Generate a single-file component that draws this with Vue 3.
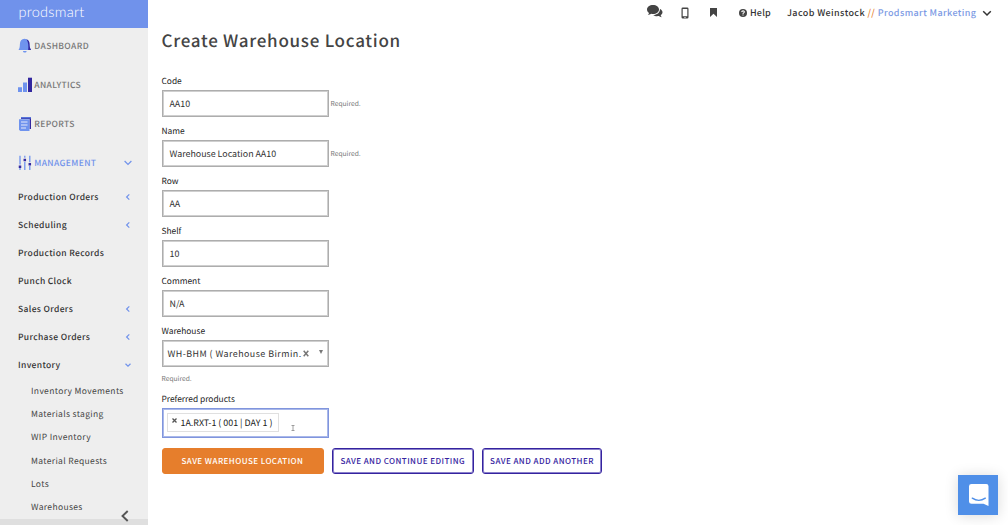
<script setup>
const fields = [
  { label: 'Code', value: 'AA10', required: true },
  { label: 'Name', value: 'Warehouse Location AA10', required: true },
  { label: 'Row', value: 'AA' },
  { label: 'Shelf', value: '10' },
  { label: 'Comment', value: 'N/A' },
]
const sections = [
  { text: 'Production Orders', arrow: 'left' },
  { text: 'Scheduling', arrow: 'left' },
  { text: 'Production Records' },
  { text: 'Punch Clock' },
  { text: 'Sales Orders', arrow: 'left' },
  { text: 'Purchase Orders', arrow: 'left' },
  { text: 'Inventory', arrow: 'down' },
]
const leaves = ['Inventory Movements', 'Materials staging', 'WIP Inventory', 'Material Requests', 'Lots', 'Warehouses']
</script>

<template>
  <div class="page">
    <aside class="sidebar">
      <div class="logo">prodsmart</div>
      <nav>
        <div class="main-item">
          <svg class="icon" width="14" height="16" viewBox="0 0 14 16">
            <path d="M6.500 .8C3.500 1 2 3 1.900 6 1.800 9 1.600 10.200 .5 12h12.600C12 10.200 11.600 9 11.500 6 11.400 3 9.500 1 6.500 .8z" fill="#6f93ee" />
            <path d="M8.500 1.300c2 .7 3 2.300 3 4.700.1 3 .5 4.200 1.600 6H10.200C10.600 8.500 10.500 4.500 8.500 1.300z" fill="#33279f" />
            <path d="M5 13h3.600c0 1-.8 1.600-1.800 1.600S5 14 5 13z" fill="#6f93ee" />
          </svg>
          <span>DASHBOARD</span>
        </div>
        <div class="main-item">
          <svg class="icon" width="14" height="16" viewBox="0 0 14 16">
            <path d="M0 10.200h4V15H0zM5 5.500h4V15H5z" fill="#6f93ee" />
            <path d="M10 .7h4V15h-4z" fill="#33279f" />
          </svg>
          <span>ANALYTICS</span>
        </div>
        <div class="main-item">
          <svg class="icon" width="14" height="16" viewBox="0 0 14 16">
            <path d="M3 1h10v12h-1.500V3H3z" fill="#33279f" />
            <path d="M3 1H13v1.500H3z" fill="#5774d8" />
            <path d="M1 3.200h10.500V15H2.300L1 13.700z" fill="#6f93ee" />
            <path d="M3 6h6.500M3 9h6.500M3 12h5" stroke="#e5eafa" stroke-width="1.100" />
          </svg>
          <span>REPORTS</span>
        </div>
        <div class="main-item active">
          <svg class="icon" width="14" height="16" viewBox="0 0 14 16">
            <path d="M2 .8v8.700M2 13v2M6.800 .8v2M6.800 7v8M11.800 .8v6.500M11.800 11v4" stroke="#6f93ee" stroke-width="1.300" />
            <path d="M2 10.500v2.500M6.800 3.800v2.500M11.800 8v2.500" stroke="#33279f" stroke-width="2.500" />
          </svg>
          <span>MANAGEMENT</span>
          <svg class="arrow" width="8" height="6" viewBox="0 0 8 6"><path d="M.6 1L4 4.500 7.400 1" /></svg>
        </div>
        <div v-for="s in sections" :key="s.text" class="section">
          <span>{{ s.text }}</span>
          <svg v-if="s.arrow === 'left'" class="arrow" width="6" height="8" viewBox="0 0 6 8"><path d="M4.300 1.300L1.600 4l2.700 2.700" /></svg>
          <svg v-if="s.arrow === 'down'" class="arrow" width="6" height="6" viewBox="0 0 6 6"><path d="M.5 1.800L3 4.200 5.500 1.800" /></svg>
        </div>
        <div class="leaves">
          <div v-for="l in leaves" :key="l" class="leaf">{{ l }}</div>
        </div>
      </nav>
      <div class="foot"></div>
      <svg class="collapse" width="8" height="12" viewBox="0 0 8 12"><path d="M6.700 1L1.500 6l5.200 5" /></svg>
    </aside>

    <main>
      <header class="topbar">
        <svg class="chat" width="16" height="13" viewBox="0 0 16 13">
          <path d="M6 0c3.400 0 6 2 6 4.500S9.400 9 6 9c-.7 0-1.300-.1-1.900-.2C3.200 9.500 2 10 .8 10c.7-.6 1.100-1.300 1.200-2C.8 7.200 0 6 0 4.500 0 2 2.600 0 6 0z" />
          <path d="M13 4c1.500.7 2.500 1.900 2.500 3.300 0 1.200-.7 2.200-1.800 3 .1.700.5 1.300 1.100 1.900-1.100 0-2.200-.4-3.100-1.100-2.200.4-4.200-.1-5.500-1.100C10 10 13 7.700 13 4z" />
        </svg>
        <svg class="phone" width="8" height="12" viewBox="0 0 8 12">
          <path fill-rule="evenodd" d="M1.800 .5h4.400q1.300 0 1.300 1.300v8.400q0 1.300-1.300 1.300H1.800Q.5 11.500.5 10.200V1.800Q.5.5 1.800.5zM1.700 2v7.300h4.600V2zM3.300 10v.8h1.400V10z" />
        </svg>
        <svg class="bookmark" width="7" height="9" viewBox="0 0 7 9"><path d="M0 0h7v9L3.500 5.800 0 9z" /></svg>
        <svg class="question" width="8" height="8" viewBox="0 0 8 8">
          <circle cx="4" cy="4" r="4" />
          <path d="M2.700 3.100C2.800 1.400 5.400 1.500 5.300 3 5.200 3.900 4 3.900 4 4.900M4 5.600v1" fill="none" stroke="#fff" stroke-width="1.100" />
        </svg>
        <span class="help">Help</span>
        <span class="user">Jacob Weinstock <i>//</i> <b>Prodsmart Marketing</b></span>
        <svg class="caret" width="10" height="7" viewBox="0 0 10 7"><path d="M1.200 1.200L5 5l3.800-3.800" fill="none" stroke="#333" stroke-width="1.500" /></svg>
      </header>

      <h1>Create Warehouse Location</h1>

      <div v-for="f in fields" :key="f.label" class="field">
        <label>{{ f.label }}</label>
        <div class="row">
          <div class="input">{{ f.value }}</div>
          <small v-if="f.required">Required.</small>
        </div>
      </div>
      <div class="field">
        <label>Warehouse</label>
        <div class="input select">
          <span>WH-BHM ( Warehouse Birmin.</span>
          <svg class="clear" width="6" height="7" viewBox="0 0 6 7"><path d="M.7 .8l4.600 5.400M5.300 .8L.7 6.200" stroke="#777" stroke-width="1.500" fill="none" /></svg>
          <svg class="tri" width="4" height="4" viewBox="0 0 4 4"><path d="M0 0h4L2 4z" fill="#777" /></svg>
        </div>
      </div>
      <small class="below">Required.</small>
      <div class="field products">
        <label>Preferred products</label>
        <div class="input tags">
          <div class="tag">
            <svg width="5" height="5" viewBox="0 0 5 5"><path d="M.5 .5l4 4M4.500 .5l-4 4" stroke="#555" stroke-width="1.300" /></svg>
            <span>1A.RXT-1 ( 001 | DAY 1 )</span>
          </div>
          <svg class="ibeam" width="4" height="6" viewBox="0 0 4 6"><path d="M.5 .5h3M2 .5v5M.5 5.500h3" stroke="#888" stroke-width=".8" /></svg>
        </div>
      </div>
      <div class="actions">
        <button class="primary">SAVE WAREHOUSE LOCATION</button>
        <button class="second">SAVE AND CONTINUE EDITING</button>
        <button class="third">SAVE AND ADD ANOTHER</button>
      </div>
    </main>

    <div class="messenger">
      <svg width="20" height="23" viewBox="0 0 20 23">
        <path d="M2.500 0h14.800Q19.500 0 19.500 2.300V22l-5-2.200h-12Q0 19.800 0 17.500V2.300Q0 0 2.500 0z" fill="#fff" />
        <path d="M3.300 14.200q6.500 4.300 13 0" fill="none" stroke="#4f8fe8" stroke-width="1.400" stroke-linecap="round" />
      </svg>
    </div>
  </div>
</template>

<style>
body { background: #fff; overflow: hidden; }
</style>

<style scoped>
.page {
  position: relative;
  display: flex;
  width: 1008px;
  height: 525px;
  overflow: hidden;
  font-family: "Noto Sans CJK SC", "Noto Sans", sans-serif;
  font-size: 9px;
  color: #333;
}
.page, .page * { text-rendering: geometricPrecision; }
.page * { box-sizing: border-box; }
svg { display: block; flex: none; }
.sidebar { position: relative; width: 148px; height: 525px; background: #eee; flex: none; overflow: hidden; }
.logo {
  height: 28px;
  padding-left: 18.500px;
  background: #7092eb;
  color: #fff;
  font: 300 14.500px/26px Lato, sans-serif;
  letter-spacing: .25px;
}
.main-item {
  display: flex;
  align-items: center;
  height: 39px;
  padding: 0 16px 0 18px;
  color: #777;
  font-size: 8.500px;
  font-weight: 500;
  letter-spacing: .36px;
}
nav > .main-item:first-child { height: 36px; margin-bottom: 1px; }
.main-item .icon { margin-right: 2.300px; }
.main-item.active { height: 39px; color: #7092eb; }
.arrow { margin-left: auto; fill: none; stroke: #7092eb; stroke-width: 1.200; }
.section {
  display: flex;
  align-items: center;
  height: 28.060px;
  padding: 1px 17px 0 18px;
  color: #333;
  font-size: 8.500px;
  font-weight: 500;
  letter-spacing: .35px;
}
.leaves { padding-top: 1.300px; }
.leaf { height: 23.300px; padding-left: 31px; font-size: 8.500px; line-height: 23.300px; letter-spacing: .35px; color: #444; }
.foot { position: absolute; left: 0; right: 0; bottom: 0; height: 6px; background: #dfdfdf; }
.collapse { position: absolute; left: 121px; top: 510px; fill: none; stroke: #555; stroke-width: 1.900; }

main { flex: 1; padding-left: 13.500px; }
.topbar { display: flex; align-items: center; height: 25px; padding-left: 485.500px; fill: #444; white-space: nowrap; }
.chat { margin: -3px 18px 0 0; }
.phone { margin-right: 21px; }
.bookmark { margin-right: 22px; }
.question { margin-right: 3px; }
.help { width: 37px; font-weight: 500; letter-spacing: .2px; }
.user { font-weight: 500; letter-spacing: .4px; width: 190px; }
.user i { color: #e67e2c; font-style: normal; }
.user b { color: #7c9ae4; font-weight: 500; }
.caret { margin: 1px 0 0 5px; }
h1 { margin: 0; height: 48px; line-height: 29px; font-size: 17px; font-weight: 500; letter-spacing: .73px; color: #444; }
.field { height: 50px; }
label { display: block; height: 17px; font-size: 8.400px; line-height: 16.500px; color: #222; }
.row { display: flex; align-items: center; }
.input {
  position: relative;
  width: 167px;
  height: 27px;
  border: 1px solid #adadad;
  box-shadow: inset 0 0 0 1px #cfcfcf;
  padding: 0 7px;
  font-size: 8.900px;
  line-height: 25px;
  white-space: nowrap;
}
small { margin: -1px 0 0 2px; font-size: 6.700px; line-height: 10px; color: #777; }
.select { padding: 0 5px; letter-spacing: .46px; }
.clear { position: absolute; left: 140px; top: 9px; }
.tri { position: absolute; left: 156px; top: 9px; }
.below { display: block; margin: 0; height: 18px; line-height: 10px; }
.products { height: 57px; }
.tags { height: 30px; border-color: #8095dd; box-shadow: inset 0 0 0 1px #a9b8ea; padding: 4px; }
.tag {
  display: flex;
  width: 112px;
  height: 19px;
  border: 1px solid #e0e0e0;
  padding: 0 4px;
  line-height: 18px;
  color: #222;
}
.tag svg { margin: 4px 4px 0 0; }
.ibeam { position: absolute; left: 128px; top: 16px; }
.actions { display: flex; gap: 8.500px; }
button {
  height: 26px;
  padding: 1px 0 0;
  border: 1px solid #35239f;
  box-shadow: inset 0 0 0 1px #8a80cb;
  border-radius: 3px;
  background: #fff;
  color: #35239f;
  font: 500 8px/23px "Noto Sans CJK SC", sans-serif;
  letter-spacing: .45px;
  white-space: nowrap;
}
.primary { width: 162px; background: #e67e2c; border-color: #e67e2c; box-shadow: none; color: #fff; }
.second { width: 141.500px; }
.third { width: 120px; }
.messenger {
  position: absolute;
  left: 958px;
  top: 475px;
  width: 40px;
  height: 40px;
  padding: 9px 0 0 11px;
  background: #4f8fe8;
  box-shadow: 0 1px 14px rgba(0, 0, 0, .15);
}
</style>
